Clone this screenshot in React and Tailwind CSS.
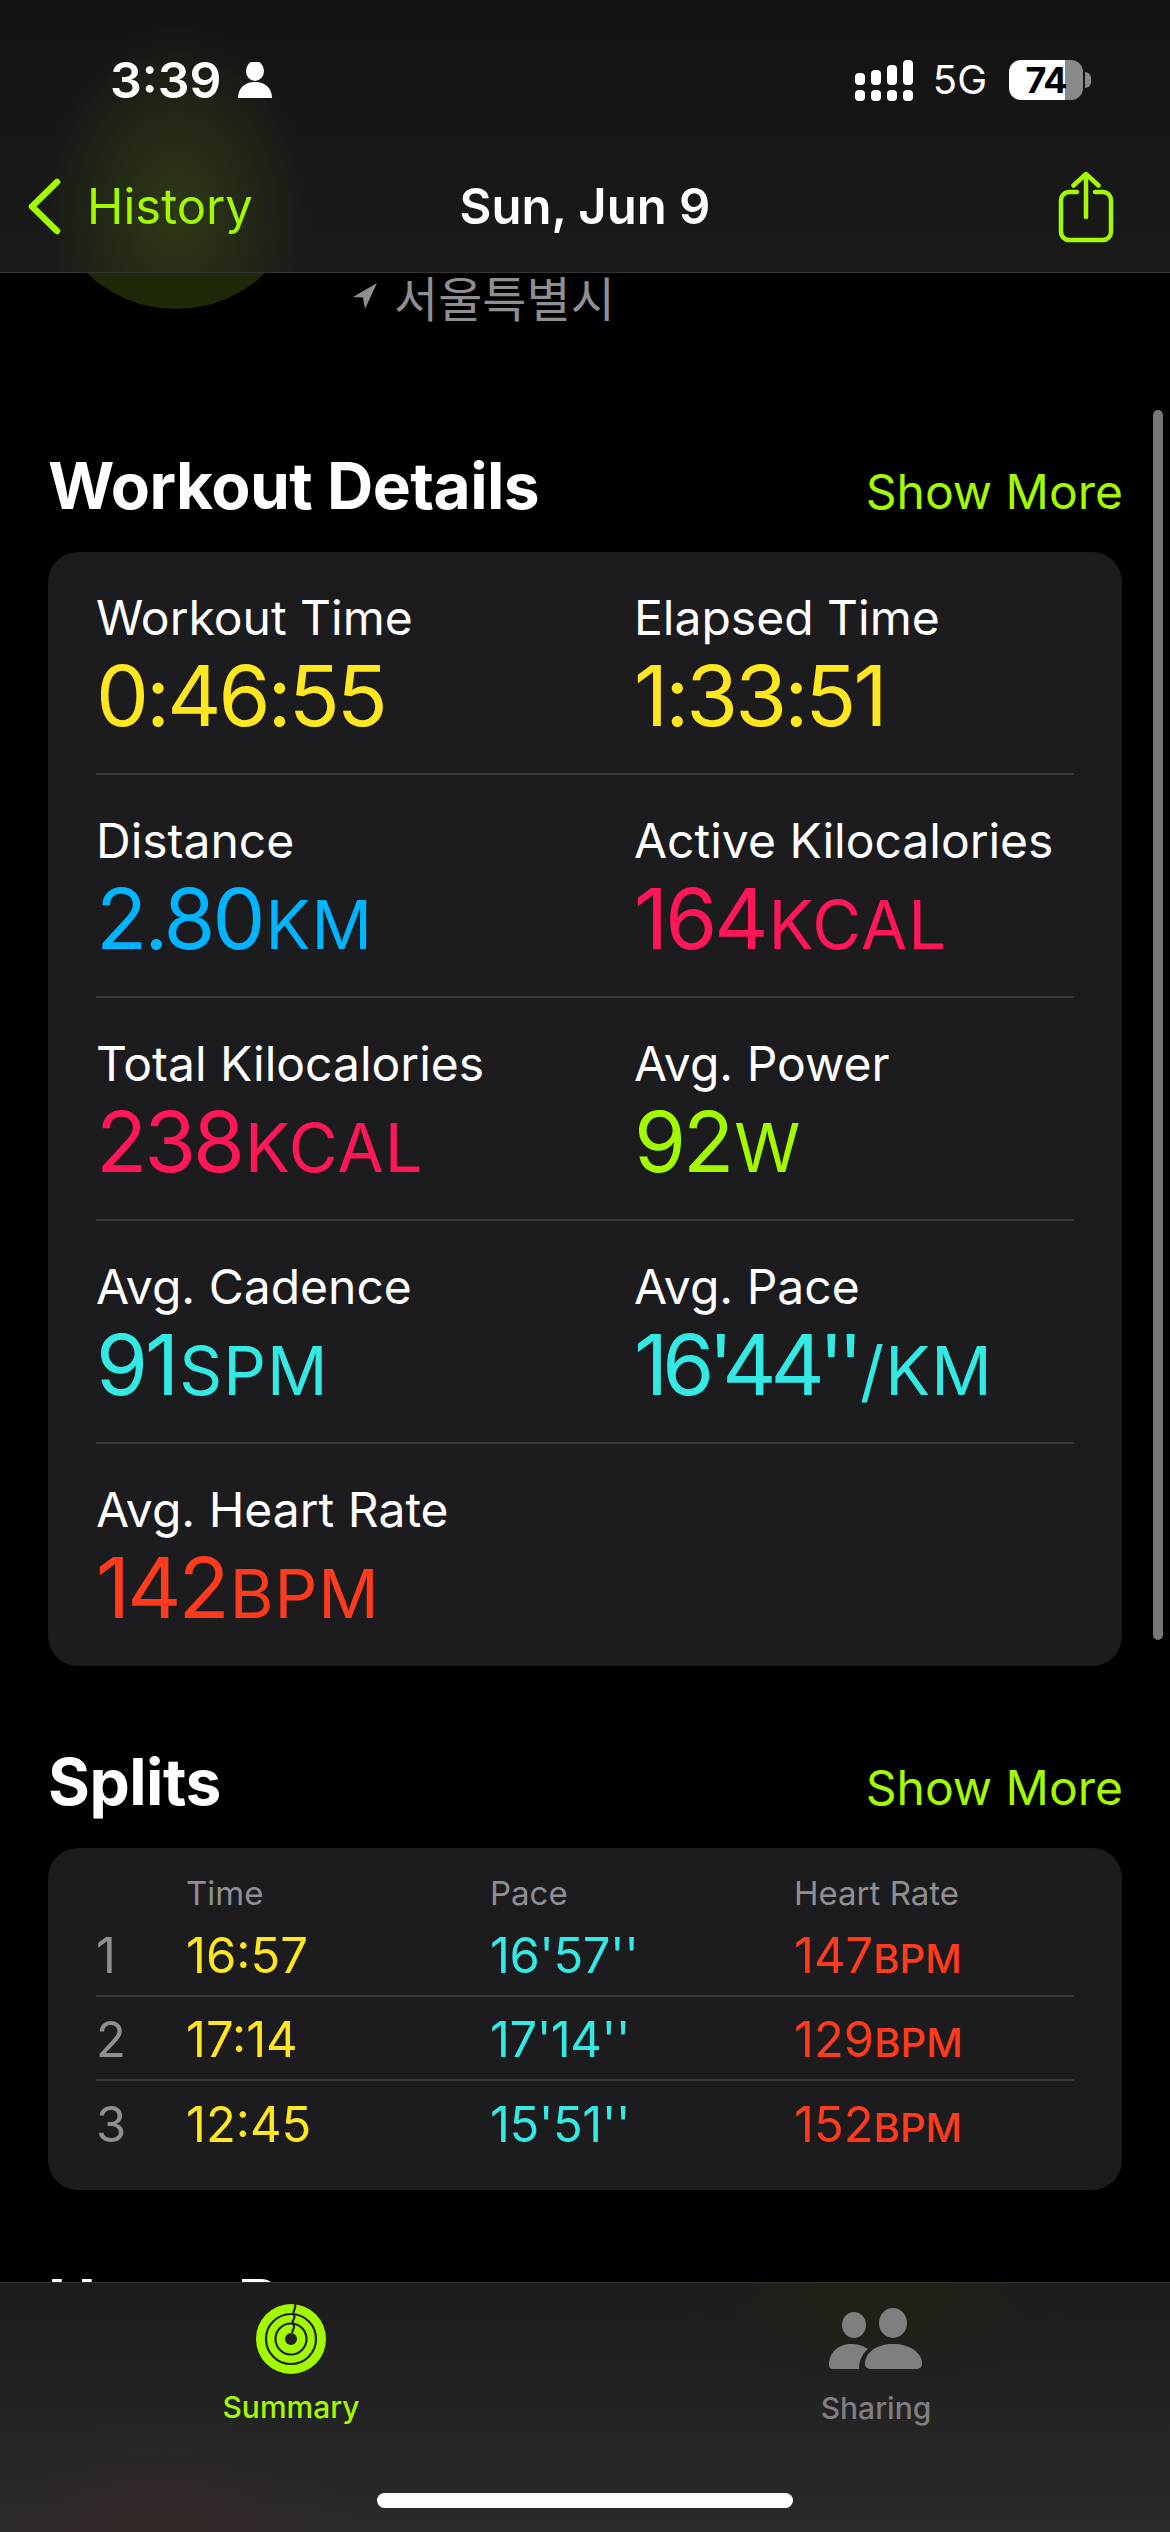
import React from "react";

function Metric({ label, value, unit, color, tight }) {
  return (
    <div className="min-w-0">
      <div className="text-[48px] leading-[56px] text-white">{label}</div>
      <div className={`mt-[6px] text-[84px] leading-[88px] whitespace-nowrap ${tight ? "tracking-[-6px]" : "tracking-[-3px]"} ${color}`}>
        {value}
        {unit && <span className="ml-[3px] text-[67px] tracking-[1px]">{unit}</span>}
      </div>
    </div>
  );
}

function MetricRow({ children, last }) {
  return (
    <div className={`grid grid-cols-[538px_1fr] h-[223px] pt-[38px] ${last ? "" : "border-b-2 border-[#38383a]"}`}>
      {children}
    </div>
  );
}

function SectionHead({ title }) {
  return (
    <div className="flex items-baseline justify-between pl-[48px] pr-[47px]">
      <h2 className="text-[64px] leading-[72px] font-bold text-white tracking-[-0.5px]">{title}</h2>
      <span className="text-[48px] leading-[56px] text-[#a3f900]">Show More</span>
    </div>
  );
}

const splits = [
  { n: "1", time: "16:57", pace: "16'57''", hr: "147" },
  { n: "2", time: "17:14", pace: "17'14''", hr: "129" },
  { n: "3", time: "12:45", pace: "15'51''", hr: "152" },
];

function SplitRow({ row, last }) {
  return (
    <div className={`grid grid-cols-[90px_304px_304px_1fr] h-[84px] pt-[4px] items-center text-[49px] ${last ? "" : "border-b-2 border-[#38383a]"}`}>
      <span className="text-[#8e8e93]">{row.n}</span>
      <span className="text-[#ffe620]">{row.time}</span>
      <span className="text-[#34e8e4] tracking-[-0.5px]">{row.pace}</span>
      <span className="text-[#ff3b1e] whitespace-nowrap">
        {row.hr}
        <span className="text-[40px] font-medium">BPM</span>
      </span>
    </div>
  );
}

function RingsIcon() {
  return (
    <svg width="70" height="70" viewBox="0 0 70 70">
      <circle cx="35" cy="35" r="35" fill="#a3f900" />
      <circle cx="35" cy="35" r="25" fill="none" stroke="#222" strokeWidth="2.2" />
      <circle cx="35" cy="35" r="15.5" fill="none" stroke="#222" strokeWidth="2.2" />
      <circle cx="35" cy="35" r="6" fill="#222" />
      <path d="M39 0c1.500 4-2 6-1.500 9.500.5 2 2.500 3-.5 7-2 2.500 3 4 .5 8-.5 1.500-1 3-1.500 4.500" fill="none" stroke="#222" strokeWidth="2.200" />
    </svg>
  );
}

function SharingIcon() {
  return (
    <svg width="94" height="62" viewBox="0 0 94 62" fill="#7f7f7f">
      <ellipse cx="25" cy="17" rx="12" ry="13" />
      <ellipse cx="64" cy="15" rx="14" ry="15" />
      <path d="M0 57c0-13 10-21 22-21 6 0 11 1 17 5-6 5-9 12-9 20H4a4 4 0 0 1-4-4z" />
      <path d="M36 56c0-12 12-20 28-20s29 8 29 20a5 5 0 0 1-5 5H41a5 5 0 0 1-5-5z" />
    </svg>
  );
}

function ShareIcon() {
  return (
    <svg width="56" height="72" viewBox="0 0 56 72" fill="none" stroke="#a3f900" strokeWidth="4.500" strokeLinecap="round" strokeLinejoin="round">
      <path d="M19 21H11a8 8 0 0 0-8 8v32a8 8 0 0 0 8 8h34a8 8 0 0 0 8-8V29a8 8 0 0 0-8-8h-8" />
      <path d="M28 46V3M15.500 14.500 28 3l12.500 11.500" />
    </svg>
  );
}

function SignalIcon() {
  return (
    <div className="flex items-end gap-[6px]">
      {["h-[12px]", "h-[15px]", "h-[20px]", "h-[25px]"].map((h) => (
        <div key={h} className="flex flex-col gap-[5px]">
          <div className={`w-[10px] rounded-[4px] bg-white ${h}`} />
          <div className="w-[10px] h-[11px] rounded-[4px] bg-white" />
        </div>
      ))}
    </div>
  );
}

export default function App() {
  return (
    <div className="relative w-[1170px] h-[2532px] bg-black flex flex-col overflow-hidden font-['Inter',sans-serif]">
      {/* top bar */}
      <header className="relative z-10 h-[273px] shrink-0 bg-[radial-gradient(ellipse_135px_190px_at_176px_215px,#2e3817_0,#242b16_45%,transparent_100%),linear-gradient(180deg,#131313,#1a1a1a)] border-b border-[#333]">
        <div className="flex items-center justify-between pt-[50px] pl-[110px] pr-[79px] h-[110px]">
          <div className="flex items-center gap-[16px]">
            <span className="text-[50px] font-semibold text-white">3:39</span>
            <svg width="34" height="36" viewBox="0 0 34 36" fill="#fff">
              <ellipse cx="17" cy="9" rx="9" ry="10" />
              <path d="M0 36c0-10 7-16 17-16s17 6 17 16z" />
            </svg>
          </div>
          <div className="flex items-center">
            <SignalIcon />
            <span className="ml-[20px] text-[40px] text-white">5G</span>
            <div className="ml-[22px] w-[74px] h-[40px] rounded-[12px] bg-[linear-gradient(90deg,#fff_76%,#8a8a8a_76%)] flex items-center justify-center text-[36px] font-bold tracking-[-1px] text-black">74</div>
            <div className="ml-[2px] w-[6px] h-[16px] rounded-r-full bg-[#8a8a8a]" />
          </div>
        </div>
        <div className="relative flex items-center justify-between pl-[28px] pr-[56px] mt-[60px]">
          <div className="flex items-center gap-[26px]">
            <svg width="33" height="57" viewBox="0 0 33 57" fill="none" stroke="#a3f900" strokeWidth="6.500" strokeLinecap="round" strokeLinejoin="round">
              <path d="M29 4 4 28.500 29 53" />
            </svg>
            <span className="text-[49px] text-[#a3f900]">History</span>
          </div>
          <ShareIcon />
          <span className="absolute left-0 right-0 text-center text-[49px] font-semibold text-white">Sun, Jun 9</span>
        </div>
      </header>

      {/* scrolled content */}
      <main className="relative flex-1 min-h-0 overflow-hidden">
        <div className="absolute left-[47px] top-[-222px] w-[258px] h-[258px] rounded-full bg-[#1e2909]" />
        <div className="relative flex items-center gap-[16px] pl-[352px] h-[46px] text-[#8e8e93]">
          <svg width="26" height="28" viewBox="0 0 26 28" fill="#8e8e93">
            <path d="M25 1 1 15l10 .5L13 27z" />
          </svg>
          <span className="text-[48px] leading-[46px] font-['Noto_Sans_CJK_KR',sans-serif]">서울특별시</span>
        </div>

        <div className="mt-[131px]">
          <SectionHead title="Workout Details" />
        </div>
        <section className="mx-[48px] mt-[30px] rounded-[30px] bg-[#1c1c1e] h-[1114px] px-[48px]">
          <MetricRow>
            <Metric label="Workout Time" value="0:46:55" color="text-[#ffe620]" />
            <Metric label="Elapsed Time" value="1:33:51" color="text-[#ffe620]" />
          </MetricRow>
          <MetricRow>
            <Metric label="Distance" value="2.80" unit="KM" color="text-[#00b4ff]" />
            <Metric label="Active Kilocalories" value="164" unit="KCAL" color="text-[#ff1757]" />
          </MetricRow>
          <MetricRow>
            <Metric label="Total Kilocalories" value="238" unit="KCAL" color="text-[#ff1757]" />
            <Metric label="Avg. Power" value="92" unit="W" color="text-[#a3f900]" />
          </MetricRow>
          <MetricRow>
            <Metric label="Avg. Cadence" value="91" unit="SPM" color="text-[#34e8e4]" />
            <Metric label="Avg. Pace" value="16'44''" unit="/KM" color="text-[#34e8e4]" tight />
          </MetricRow>
          <MetricRow last>
            <Metric label="Avg. Heart Rate" value="142" unit="BPM" color="text-[#ff3b1e]" />
          </MetricRow>
        </section>

        <div className="mt-[80px]">
          <SectionHead title="Splits" />
        </div>
        <section className="mx-[48px] mt-[30px] rounded-[30px] bg-[#1c1c1e] h-[342px] px-[48px] pt-[21px]">
          <div className="grid grid-cols-[90px_304px_304px_1fr] h-[44px] text-[33px] text-[#8e8e93]">
            <span />
            <span>Time</span>
            <span>Pace</span>
            <span>Heart Rate</span>
          </div>
          {splits.map((row, i) => (
            <SplitRow key={row.n} row={row} last={i === splits.length - 1} />
          ))}
        </section>

        <div className="mt-[77px] pl-[48px]">
          <h2 className="text-[64px] leading-[72px] font-bold text-white">Heart Rate</h2>
        </div>

        {/* scroll indicator */}
        <div className="absolute right-[7px] top-[137px] w-[10px] h-[1230px] rounded-full bg-[#777]" />
      </main>

      {/* tab bar */}
      <nav className="relative z-10 h-[250px] shrink-0 bg-[radial-gradient(ellipse_200px_120px_at_880px_0,#1e2315,transparent),radial-gradient(ellipse_220px_110px_at_160px_250px,#332826,transparent),linear-gradient(180deg,#1c1c1c,#2a2a2a)] border-t border-[#333]">
        <div className="grid grid-cols-[582px_588px]">
          <div className="flex flex-col items-center gap-[11px] pt-[21px]">
            <RingsIcon />
            <span className="text-[30px] font-medium text-[#a3f900]">Summary</span>
          </div>
          <div className="flex flex-col items-center gap-[16px] pt-[25px]">
            <SharingIcon />
            <span className="text-[30px] font-medium text-[#7f7f7f]">Sharing</span>
          </div>
        </div>
        <div className="absolute left-[377px] top-[210px] w-[416px] h-[15px] rounded-full bg-white" />
      </nav>
    </div>
  );
}
